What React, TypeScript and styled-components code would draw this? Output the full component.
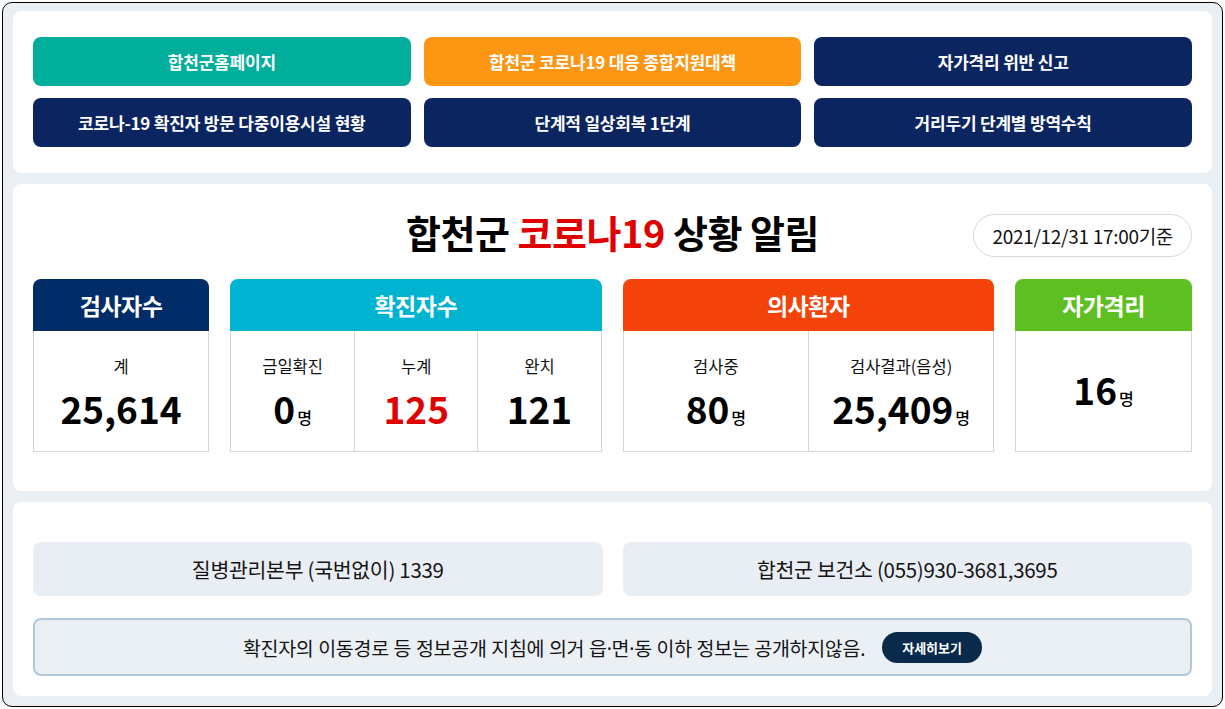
import styled, { createGlobalStyle } from "styled-components";

const GlobalStyle = createGlobalStyle`
	html, body {
		margin: 0;
		padding: 0;
		background: #fff;
	}
	body {
		font-family: "Noto Sans CJK KR", "Noto Sans", sans-serif;
		color: #111;
	}
	* {
		box-sizing: border-box;
	}
`;

const Frame = styled.div`
	margin: 2px;
	height: 705px;
	border: 1px solid #000;
	border-radius: 10px;
	background: #eaeff4;
	padding: 8px 10px;
	display: flex;
	flex-direction: column;
	gap: 11px;
`;

const Panel = styled.section<{ $pad: string }>`
	background: #fff;
	border-radius: 8px;
	padding: ${(p) => p.$pad};
`;

const LinkGrid = styled.div`
	display: grid;
	grid-template-columns: repeat(3, 1fr);
	gap: 12px 13px;
`;

const LinkButton = styled.a<{ $bg: string }>`
	display: flex;
	align-items: center;
	justify-content: center;
	height: 49px;
	border-radius: 8px;
	background: ${(p) => p.$bg};
	color: #fff;
	font-size: 17px;
	font-weight: 700;
	text-decoration: none;
	letter-spacing: -0.2px;
`;

const TitleRow = styled.div`
	display: grid;
	grid-template-columns: 1fr auto 1fr;
	align-items: center;
	margin-bottom: 22px;
`;

const Title = styled.h1`
	grid-column: 2;
	margin: -8px 0 0;
	font-size: 38px;
	font-weight: 700;
	line-height: 43px;
	color: #000;
	letter-spacing: -0.5px;

	em {
		font-style: normal;
		color: #e00000;
	}
`;

const DateBadge = styled.div`
	justify-self: end;
	height: 43px;
	padding: 0 18px;
	display: flex;
	align-items: center;
	border: 1px solid #d3d8e0;
	border-radius: 22px;
	font-size: 19px;
	letter-spacing: -0.3px;
	color: #111;
`;

const CardRow = styled.div`
	display: grid;
	grid-template-columns: 176px 1fr 1fr 177px;
	gap: 21px;
`;

const Card = styled.div`
	display: flex;
	flex-direction: column;
`;

const CardHead = styled.div<{ $bg: string }>`
	height: 52px;
	border-radius: 8px 8px 0 0;
	background: ${(p) => p.$bg};
	color: #fff;
	font-size: 23px;
	font-weight: 700;
	display: flex;
	align-items: center;
	justify-content: center;
	letter-spacing: -0.5px;
`;

const CardBody = styled.div<{ $cols: number }>`
	height: 121px;
	border: 1px solid #d6d6db;
	border-top: none;
	display: grid;
	grid-template-columns: repeat(${(p) => p.$cols}, 1fr);
`;

const Cell = styled.div<{ $center?: boolean }>`
	display: flex;
	flex-direction: column;
	align-items: center;
	justify-content: ${(p) => (p.$center ? "center" : "flex-start")};
	padding: ${(p) => (p.$center ? "5px 0 0" : "24px 0 0")};
	gap: 9px;

	& + & {
		border-left: 1px solid #d6d6db;
	}
`;

const Label = styled.div`
	font-size: 16.5px;
	line-height: 22px;
	color: #111;
`;

const Value = styled.div<{ $red?: boolean }>`
	font-size: 37px;
	font-weight: 700;
	line-height: 44px;
	color: ${(p) => (p.$red ? "#e00000" : "#000")};

	small {
		font-size: 16px;
		font-weight: 500;
		margin-left: 2px;
		color: #000;
	}
`;

const ContactGrid = styled.div`
	display: grid;
	grid-template-columns: 1fr 1fr;
	gap: 20px;
	margin-bottom: 22px;
`;

const ContactBox = styled.div`
	height: 54px;
	border-radius: 8px;
	background: #e9eef4;
	display: flex;
	align-items: center;
	justify-content: center;
	font-size: 20.5px;
	color: #151515;
	letter-spacing: -0.3px;
`;

const Notice = styled.div`
	height: 58px;
	border: 2px solid #b2c7dc;
	border-radius: 8px;
	background: #ebf0f5;
	display: flex;
	align-items: center;
	justify-content: center;
	gap: 17px;
	font-family: "Noto Sans", "Noto Sans CJK KR", sans-serif;
	font-size: 19.5px;
	letter-spacing: -0.3px;
	color: #151515;
`;

const MoreButton = styled.a`
	width: 100px;
	height: 31px;
	border-radius: 16px;
	background: #0a2a4c;
	color: #fff;
	font-family: "Noto Sans CJK KR", sans-serif;
	font-size: 13px;
	font-weight: 700;
	text-decoration: none;
	display: flex;
	align-items: center;
	justify-content: center;
	letter-spacing: 0;
`;

interface LinkItem {
	title: string;
	color: string;
}

const links: LinkItem[] = [
	{ title: "합천군홈페이지", color: "#00ae9b" },
	{ title: "합천군 코로나19 대응 종합지원대책", color: "#fd9613" },
	{ title: "자가격리 위반 신고", color: "#0b2561" },
	{ title: "코로나-19 확진자 방문 다중이용시설 현황", color: "#0b2561" },
	{ title: "단계적 일상회복 1단계", color: "#0b2561" },
	{ title: "거리두기 단계별 방역수칙", color: "#0b2561" },
];

interface StatItem {
	label?: string;
	value: string;
	unit?: boolean;
	red?: boolean;
}

interface StatCard {
	title: string;
	color: string;
	items: StatItem[];
}

const cards: StatCard[] = [
	{ title: "검사자수", color: "#002c67", items: [{ label: "계", value: "25,614" }] },
	{
		title: "확진자수",
		color: "#00b3d1",
		items: [
			{ label: "금일확진", value: "0", unit: true },
			{ label: "누계", value: "125", red: true },
			{ label: "완치", value: "121" },
		],
	},
	{
		title: "의사환자",
		color: "#f3420a",
		items: [
			{ label: "검사중", value: "80", unit: true },
			{ label: "검사결과(음성)", value: "25,409", unit: true },
		],
	},
	{ title: "자가격리", color: "#5ebf22", items: [{ value: "16", unit: true }] },
];

const App = () => {
	return (
		<>
			<GlobalStyle />
			<Frame>
				<Panel $pad="26px 20px">
					<LinkGrid>
						{links.map((item) => (
							<LinkButton key={item.title} href="#" $bg={item.color}>
								{item.title}
							</LinkButton>
						))}
					</LinkGrid>
				</Panel>

				<Panel $pad="30px 20px 39px">
					<TitleRow>
						<Title>
							합천군 <em>코로나19</em> 상황 알림
						</Title>
						<DateBadge>2021/12/31 17:00기준</DateBadge>
					</TitleRow>
					<CardRow>
						{cards.map((card) => (
							<Card key={card.title}>
								<CardHead $bg={card.color}>{card.title}</CardHead>
								<CardBody $cols={card.items.length}>
									{card.items.map((item, idx) => (
										<Cell key={idx} $center={!item.label}>
											{item.label && <Label>{item.label}</Label>}
											<Value $red={item.red}>
												{item.value}
												{item.unit && <small>명</small>}
											</Value>
										</Cell>
									))}
								</CardBody>
							</Card>
						))}
					</CardRow>
				</Panel>

				<Panel $pad="40px 20px 20px">
					<ContactGrid>
						<ContactBox>질병관리본부 (국번없이) 1339</ContactBox>
						<ContactBox>합천군 보건소 (055)930-3681,3695</ContactBox>
					</ContactGrid>
					<Notice>
						확진자의 이동경로 등 정보공개 지침에 의거 읍·면·동 이하 정보는 공개하지않음.
						<MoreButton href="#">자세히보기</MoreButton>
					</Notice>
				</Panel>
			</Frame>
		</>
	);
};

export default App;
